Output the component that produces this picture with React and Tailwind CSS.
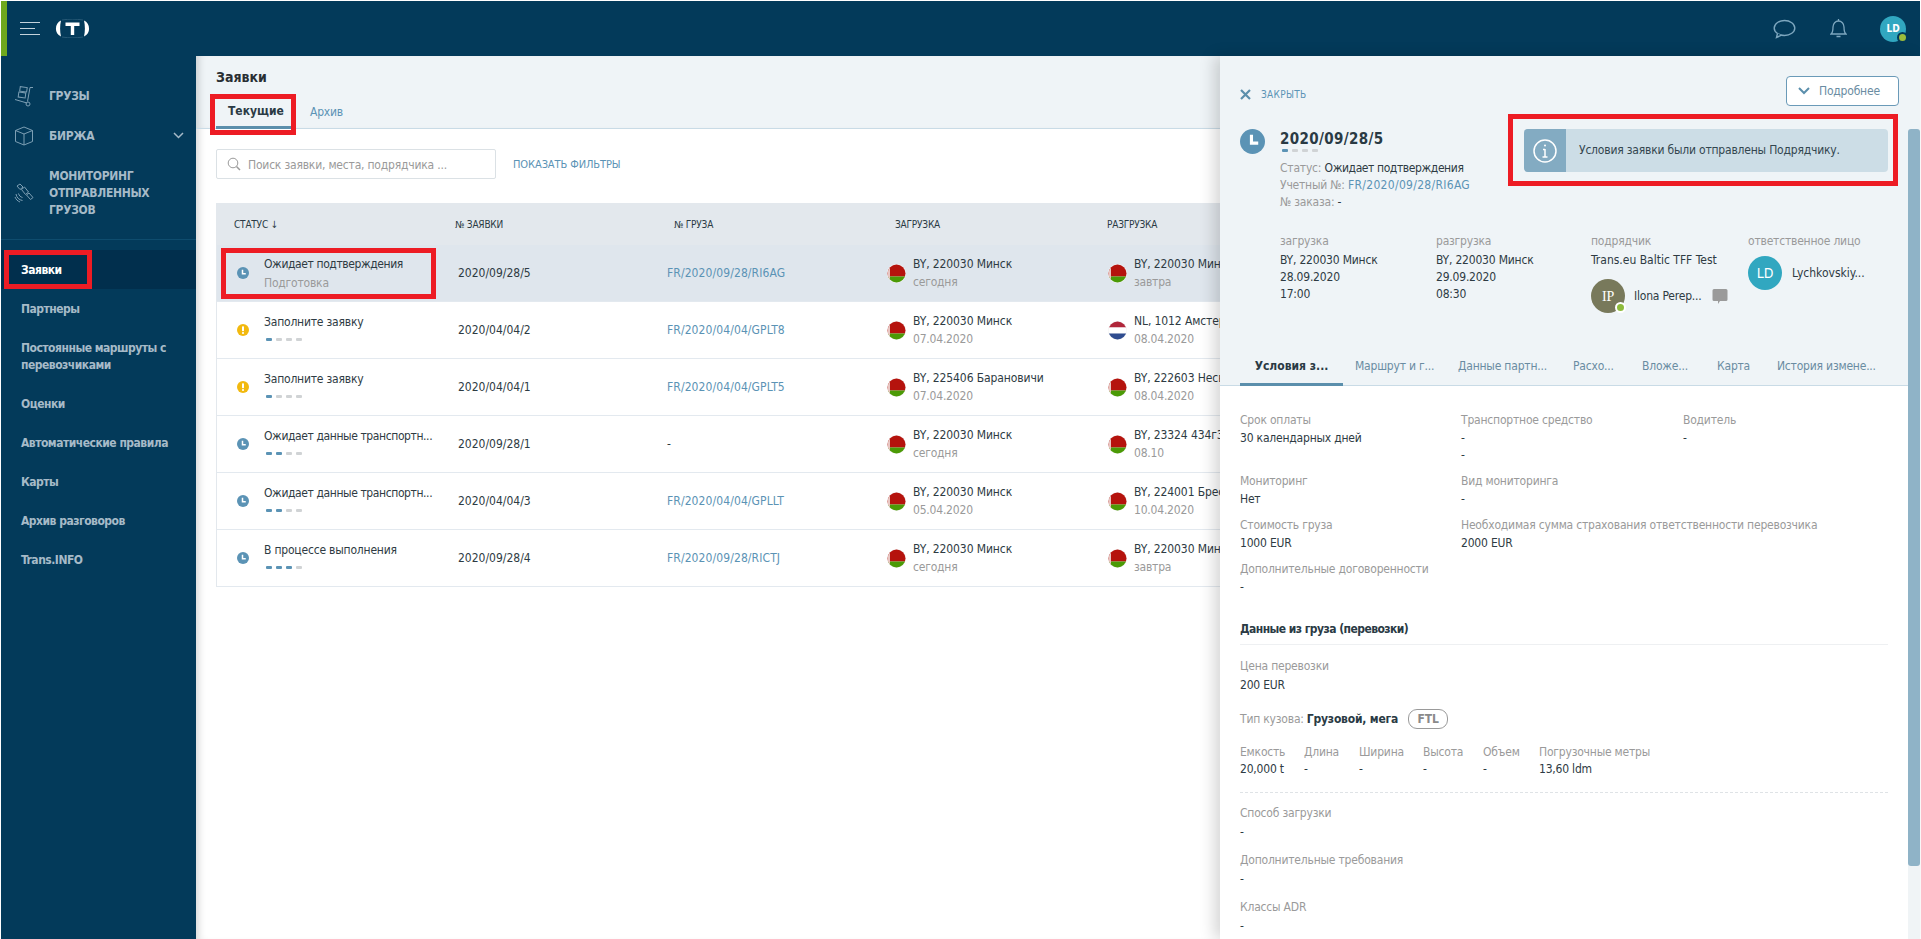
import React from "react";

const F = { fontFamily: '"DejaVu Sans Condensed", "DejaVu Sans", "Noto Sans", sans-serif', fontStretch: "condensed" };
const LABEL = "text-[#9a9a9a]";
const RED = "absolute border-[5px] border-[#ed1c24] pointer-events-none";

function Clock({ size = 12 }) {
  return (
    <svg width={size} height={size} viewBox="0 0 24 24" className="shrink-0">
      <circle cx="12" cy="12" r="12" fill="#5b93b5" />
      <path d="M11 5.500v8h6.500" fill="none" stroke="#fff" strokeWidth="3" />
    </svg>
  );
}
function Warn() {
  return (
    <svg width="12" height="12" viewBox="0 0 24 24" className="shrink-0">
      <circle cx="12" cy="12" r="12" fill="#f2b90f" />
      <rect x="10" y="4.500" width="4" height="10" rx="1.500" fill="#fff" />
      <circle cx="12" cy="18" r="2.200" fill="#fff" />
    </svg>
  );
}
function Dots({ n }) {
  return (
    <div className="flex gap-[4px] ml-[2px]">
      {[0, 1, 2, 3].map((i) => (
        <span key={i} className={i < n ? "w-[6px] h-[3px] rounded-[1px] bg-[#5b93b5]" : "w-[6px] h-[3px] rounded-[1px] bg-[#d0d3d5]"} />
      ))}
    </div>
  );
}
function Flag({ nl, id }) {
  return (
    <svg width="19" height="19" viewBox="0 0 19 19" className="shrink-0">
      <defs>
        <clipPath id={id}><circle cx="9.500" cy="9.500" r="9" /></clipPath>
      </defs>
      <circle cx="9.500" cy="9.500" r="9.500" fill="#f2f2f2" />
      <g clipPath={`url(#${id})`}>
        {nl ? (
          <>
            <rect width="19" height="6.500" fill="#b0263a" />
            <rect y="6.500" width="19" height="6" fill="#fff" />
            <rect y="12.500" width="19" height="6.500" fill="#2f4c8f" />
          </>
        ) : (
          <>
            <rect width="19" height="12.500" fill="#b5130d" />
            <rect y="12.500" width="19" height="6.500" fill="#4b9a06" />
            <rect width="3" height="19" fill="#e9c6c2" />
          </>
        )}
      </g>
    </svg>
  );
}

function Cargo() {
  return (
    <svg width="20" height="21" viewBox="0 0 20 21" fill="none" stroke="#7d9fb4" strokeWidth="1">
      <path d="M19 1.500h-3l-2.500 14" />
      <path d="M1 13.500l12 3.500" />
      <circle cx="14" cy="18" r="2" />
      <rect x="6" y="1" width="7" height="4.500" transform="rotate(8 9 3)" />
      <rect x="4.500" y="6.500" width="7" height="5" transform="rotate(8 8 9)" />
    </svg>
  );
}
function BoxI() {
  return (
    <svg width="20" height="20" viewBox="0 0 20 20" fill="none" stroke="#7d9fb4" strokeWidth="1">
      <path d="M10 1l8.500 3.500v11L10 19l-8.500-3.500v-11z" />
      <path d="M1.500 4.500L10 8l8.500-3.500M10 8v11" />
    </svg>
  );
}
function Sat() {
  return (
    <svg width="20" height="20" viewBox="0 0 20 20" fill="none" stroke="#7d9fb4" strokeWidth="1">
      <path d="M3 3l3-2 3 3-3 2.500z" />
      <path d="M7.500 6.500l3-2.500 4 5-3 2.500z" />
      <path d="M12.500 12l2.500-2 4 4.500-2.500 2z" />
      <path d="M2 11c.5 3.500 3 6 6.500 6.500M1 14c1 2.500 2.500 4 5 5M4.500 10.500c.5 2 2 3.500 4 4" />
    </svg>
  );
}

function TopBar() {
  return (
    <header className="h-[55px] shrink-0 bg-[#033a5a] flex items-center">
      <div className="w-[6px] h-full bg-[#6fa81e]" />
      <div className="ml-[13px] flex flex-col gap-[4.500px] w-[20px]">
        <span className="h-[1.500px] bg-[#c4d3dc]" />
        <span className="h-[1.500px] bg-[#c4d3dc] w-[15px]" />
        <span className="h-[1.500px] bg-[#c4d3dc]" />
      </div>
      <svg width="37" height="19" viewBox="0 0 37 19" className="ml-[14px]">
        <path d="M8 1C16 -.2 21 -.2 29 1M8 18c8 1.200 13 1.200 21 0" fill="none" stroke="#3f6d88" strokeWidth=".6" />
        <path d="M7 1.500C1 4 -.5 14 7 17.500c-1.200-5-1.200-11 0-16z" fill="#fff" />
        <path d="M30 1.500C36 4 37.500 14 30 17.500c1.200-5 1.200-11 0-16z" fill="#fff" />
        <path d="M11.500 3.500h14v3.400h-5.300v9.100h-3.400V6.900h-5.300z" fill="#fff" />
      </svg>
      <div className="ml-auto flex items-center">
        <svg width="23" height="20" viewBox="0 0 23 20" fill="none" stroke="#7ea7bf" strokeWidth="1.400">
          <ellipse cx="11.500" cy="9" rx="10.300" ry="7.500" />
          <path d="M4.500 14.500L3.500 18.500l5-2.300" fill="#033a5a" />
        </svg>
        <svg width="17" height="21" viewBox="0 0 17 21" fill="none" stroke="#7ea7bf" strokeWidth="1.300" className="ml-[34px]">
          <path d="M1 16c2-1.500 2-3 2-7 0-3.500 2.500-6 5.500-6s5.500 2.500 5.500 6c0 4 0 5.500 2 7z" />
          <path d="M8.500 1v2M6.500 18.500h4" />
        </svg>
        <div className="relative ml-[33px] mr-[14px] w-[26px] h-[26px] rounded-full bg-[#31a7c0] flex items-center justify-center text-white text-[10px] font-bold">
          LD
          <span className="absolute right-[-2px] bottom-[-1px] w-[11px] h-[11px] rounded-full bg-[#9cbc3b] border-[2px] border-[#033a5a]" />
        </div>
      </div>
    </header>
  );
}

function Sidebar() {
  const top = [
    { t: ["ГРУЗЫ"], i: <Cargo />, h: 40 },
    { t: ["БИРЖА"], i: <BoxI />, h: 40, ch: true },
    { t: ["МОНИТОРИНГ", "ОТПРАВЛЕННЫХ", "ГРУЗОВ"], i: <Sat />, h: 74 },
  ];
  const sub = [["Партнеры"], ["Постоянные маршруты с", "перевозчиками"], ["Оценки"], ["Автоматические правила"], ["Карты"], ["Архив разговоров"], ["Trans.INFO"]];
  return (
    <aside className="w-[195px] shrink-0 bg-[#033a5a] flex flex-col pt-[20px] text-[12px] font-bold text-[#a6bac8] z-10">
      {top.map((x) => (
        <div key={x.t[0]} className="flex items-center relative pl-[13px] text-[12px] leading-[17px] tracking-[-0.3px]" style={{ height: x.h }}>
          <span className="w-[20px] flex justify-center">{x.i}</span>
          <div className="ml-[15px]">{x.t.map((l) => <div key={l}>{l}</div>)}</div>
          {x.ch && (
            <svg width="11" height="7" viewBox="0 0 11 7" fill="none" stroke="#a6bac8" strokeWidth="1.500" className="absolute left-[172px] top-[16px]">
              <path d="M1 1l4.500 4.500L10 1" />
            </svg>
          )}
        </div>
      ))}
      <div className="mt-[9px] h-[1px] bg-[#0e4c6e]" />
      <div className="mt-[10px] relative h-[39px] bg-[#012f4d] flex items-center pl-[20px] text-white tracking-[-0.5px]">
        Заявки
        <div className={`${RED} left-[3px] top-0 w-[88px] h-[39px]`} />
      </div>
      <div className="mt-[12px] pl-[20px] flex flex-col gap-[22px] leading-[17px] tracking-[-0.5px]">
        {sub.map((s) => (
          <div key={s[0]}>{s.map((l) => <div key={l}>{l}</div>)}</div>
        ))}
      </div>
    </aside>
  );
}

const ROWS = [
  { s: "Ожидает подтверждения", sub: "Подготовка", ic: "c", n: 1, no: "2020/09/28/5", fr: "FR/2020/09/28/RI6AG", a: "BY, 220030 Минск", ad: "сегодня", b: "BY, 220030 Минск", bd: "завтра", active: true, tight: true },
  { s: "Заполните заявку", ic: "w", n: 1, no: "2020/04/04/2", fr: "FR/2020/04/04/GPLT8", a: "BY, 220030 Минск", ad: "07.04.2020", b: "NL, 1012 Амстердам", bd: "08.04.2020", nl: true },
  { s: "Заполните заявку", ic: "w", n: 1, no: "2020/04/04/1", fr: "FR/2020/04/04/GPLT5", a: "BY, 225406 Барановичи", ad: "07.04.2020", b: "BY, 222603 Несвиж", bd: "08.04.2020" },
  { s: "Ожидает данные транспортн...", ic: "c", n: 2, no: "2020/09/28/1", fr: "-", dark: true, a: "BY, 220030 Минск", ad: "сегодня", b: "BY, 23324 434г3", bd: "08.10", tight: true },
  { s: "Ожидает данные транспортн...", ic: "c", n: 2, no: "2020/04/04/3", fr: "FR/2020/04/04/GPLLT", a: "BY, 220030 Минск", ad: "05.04.2020", b: "BY, 224001 Брест", bd: "10.04.2020", tight: true },
  { s: "В процессе выполнения", ic: "c", n: 3, no: "2020/09/28/4", fr: "FR/2020/09/28/RICTJ", a: "BY, 220030 Минск", ad: "сегодня", b: "BY, 220030 Минск", bd: "завтра" },
];
const GRID = "grid grid-cols-[235px_213px_221px_221px_1fr]";

function Place({ top, bottom, id, nl }) {
  return (
    <div className="pl-[1px] flex items-center">
      <Flag id={id} nl={nl} />
      <div className="ml-[7px] whitespace-nowrap">
        <div className="relative top-[1px] tracking-[-0.1px]">{top}</div>
        <div className={`mt-[2px] ${LABEL}`}>{bottom}</div>
      </div>
    </div>
  );
}

function Main() {
  return (
    <main className="flex-1 min-w-0 bg-white relative shadow-[inset_8px_0_8px_-6px_rgba(0,0,0,0.18)]">
      <div className="h-[73px] bg-[#eff4f7] border-b border-[#c9dbe6] pl-[20px] relative shadow-[inset_8px_0_8px_-6px_rgba(0,0,0,0.18)]">
        <div className="pt-[12px] text-[14px] font-bold leading-[18px] text-[#2a2f33] tracking-[0px]">Заявки</div>
        <div className="flex mt-[9px] text-[12px] leading-[17px]">
          <div className="relative w-[75px] h-[34px] pl-[12px] pt-[8px] font-bold text-[#2a3a44] border-b-[3px] border-[#5b8fac] tracking-[0px]">
            Текущие
            <div className={`${RED} left-[-6px] top-[-1px] w-[86px] h-[41px]`} />
          </div>
          <div className="ml-[19px] pt-[9px] text-[#5b93b5]">Архив</div>
        </div>
      </div>
      <div className="pl-[20px] pt-[20px] flex items-center">
        <div className="w-[280px] h-[30px] border border-[#dbe1e5] rounded-[2px] flex items-center pl-[10px] text-[12px] text-[#9a9a9a]">
          <svg width="14" height="14" viewBox="0 0 14 14" fill="none" stroke="#9a9a9a" strokeWidth="1" className="mr-[7px]">
            <circle cx="6" cy="6" r="4.800" />
            <path d="M9.500 9.500l3.500 3.500" strokeWidth="1.500" />
          </svg>
          <span className="pt-[2px]">Поиск заявки, места, подрядчика ...</span>
        </div>
        <div className="ml-[17px] pt-[2px] text-[11px] text-[#5b93b5] tracking-[-0.1px]">ПОКАЗАТЬ ФИЛЬТРЫ</div>
      </div>
      <div className="ml-[20px] mt-[24px] w-[1690px] border-l border-[#e3e8ed]">
        <div className={`${GRID} h-[42px] items-center bg-[#e3e8ed] text-[10px] text-[#2a3a44]`}>
          <div className="pl-[17px]">СТАТУС ↓</div>
          <div className="pl-[3px]">№ ЗАЯВКИ</div>
          <div className="pl-[9px]">№ ГРУЗА</div>
          <div className="pl-[9px]">ЗАГРУЗКА</div>
          <div>РАЗГРУЗКА</div>
        </div>
        {ROWS.map((r, i) => (
          <div key={i} className={`${GRID} h-[57px] items-center border-b border-[#e3e9ef] text-[12px] leading-[17px] text-[#2e3b43] ${r.active ? "bg-[#dfe6ed]" : "bg-white"}`}>
            <div className="relative h-full flex items-center pl-[20px]">
              {r.ic === "c" ? <Clock /> : <Warn />}
              <div className="ml-[15px] whitespace-nowrap">
                <div className={r.tight ? "relative top-[1px] tracking-[-0.4px]" : "relative top-[1px]"}>{r.s}</div>
                <div className={`mt-[3px] ${r.sub ? "" : "h-[14px] flex items-center relative top-[-1px]"} ${LABEL}`}>{r.sub ? r.sub : <Dots n={r.n} />}</div>
              </div>
              {r.active && <div className={`${RED} left-[4px] top-[3px] w-[215px] h-[51px]`} />}
            </div>
            <div className="pl-[6px] tracking-[0px]">{r.no}</div>
            <div className={`pl-[2px] tracking-[0.1px] ${r.dark ? "" : "text-[#5b93b5]"}`}>{r.fr}</div>
            <Place top={r.a} bottom={r.ad} id={`fa${i}`} />
            <Place top={r.b} bottom={r.bd} id={`fb${i}`} nl={r.nl} />
          </div>
        ))}
      </div>
    </main>
  );
}

function Field({ label, value, className = "", gap = "mt-[1px]" }) {
  return (
    <div className={className}>
      <div className={LABEL}>{label}</div>
      <div className={`${gap} text-[#2e3b43]`}>{value}</div>
    </div>
  );
}

function Panel() {
  const tabs = [
    ["Маршрут и г...", 103], ["Данные партн...", 115], ["Расхо...", 69], ["Вложе...", 75], ["Карта", 60], ["История измене...", 110],
  ];
  return (
    <section className="absolute top-0 right-0 bottom-0 w-[700px] bg-white shadow-[-6px_0_14px_rgba(0,0,0,0.16)] text-[12px] leading-[17px] z-20 overflow-hidden">
      <div className="h-[330px] bg-[#eff4f7] border-b border-[#c9dbe6] relative flex flex-col">
        <div className="pl-[20px] pr-[21px] pt-[20px] flex items-start justify-between">
          <div className="flex items-center mt-[10px] text-[10px] text-[#5b93b5] leading-[17px] tracking-[0.3px]">
            <svg width="11" height="11" viewBox="0 0 11 11" stroke="#5b8fac" strokeWidth="2.200" fill="none"><path d="M1 1l9 9M10 1l-9 9" /></svg>
            <span className="ml-[10px]">ЗАКРЫТЬ</span>
          </div>
          <div className="w-[113px] h-[30px] rounded-[4px] border border-[#6a9ab8] bg-white flex items-center pl-[11px] text-[#6a8ca2]">
            <svg width="12" height="8" viewBox="0 0 12 8" fill="none" stroke="#5b8fac" strokeWidth="2"><path d="M1 1l5 5 5-5" /></svg>
            <span className="ml-[9px]">Подробнее</span>
          </div>
        </div>
        <div className="pl-[20px] mt-[23px] flex items-start">
          <div className="w-[284px] flex items-start">
            <Clock size={25} />
            <div className="ml-[15px]">
              <div className="text-[15px] leading-[20px] font-bold text-[#2a3a44] tracking-[0.35px]">2020/09/28/5</div>
              <Dots n={1} />
              <div className="mt-[8px] text-[#2e3b43]"><span className={LABEL}>Статус:</span> <span className="tracking-[-0.4px]">Ожидает подтверждения</span></div>
              <div><span className={LABEL}>Учетный №:</span> <span className="text-[#5b93b5] tracking-[0.3px]">FR/2020/09/28/RI6AG</span></div>
              <div><span className={LABEL}>№ заказа:</span> <span className="text-[#2e3b43]">-</span></div>
            </div>
          </div>
          <div className="relative w-[364px] h-[43px] rounded-[4px] bg-[#ccdde6] flex items-center overflow-visible">
            <div className="w-[42px] h-full bg-[#83abc2] rounded-l-[4px] flex items-center justify-center">
              <svg width="24" height="24" viewBox="0 0 24 24" fill="none" stroke="#fff" strokeWidth="1.500">
                <circle cx="12" cy="12" r="11" />
                <path d="M12 10v8M9.500 18h5M10 10.500h2" />
                <circle cx="12" cy="6.500" r="1" fill="#fff" stroke="none" />
              </svg>
            </div>
            <span className="ml-[13px] text-[#33464f]">Условия заявки были отправлены Подрядчику.</span>
            <div className={`${RED} left-[-16px] top-[-15px] w-[390px] h-[72px]`} />
          </div>
        </div>
        <div className="absolute left-[60px] top-[177px] grid grid-cols-[156px_155px_157px_150px] text-[#2e3b43]">
          <div>
            <div className={LABEL}>загрузка</div>
            <div className="mt-[2px]">BY, 220030 Минск<br />28.09.2020<br />17:00</div>
          </div>
          <div>
            <div className={LABEL}>разгрузка</div>
            <div className="mt-[2px]">BY, 220030 Минск<br />29.09.2020<br />08:30</div>
          </div>
          <div>
            <div className={LABEL}>подрядчик</div>
            <div className="mt-[2px] whitespace-nowrap tracking-[0px]">Trans.eu Baltic TFF Test</div>
            <div className="mt-[10px] flex items-center">
              <div className="relative w-[34px] h-[34px] rounded-full bg-[#78795b] text-white text-[14px] flex items-center justify-center" style={{ fontFamily: '"Liberation Serif", serif' }}>
                IP
                <span className="absolute right-[-1px] bottom-[0px] w-[11px] h-[11px] rounded-full bg-[#8dbb3c] border-[2px] border-white" />
              </div>
              <span className="ml-[9px] whitespace-nowrap">Ilona Perep...</span>
              <svg width="16" height="17" viewBox="0 0 16 17" className="ml-[10px]"><path d="M2 1h12a1.500 1.500 0 0 1 1.500 1.500v9A1.500 1.500 0 0 1 14 13H8l-2 3v-3H2A1.500 1.500 0 0 1 .5 11.500v-9A1.500 1.500 0 0 1 2 1z" fill="#9a9a9a" /></svg>
            </div>
          </div>
          <div>
            <div className={LABEL}>ответственное лицо</div>
            <div className="mt-[6px] flex items-center">
              <div className="w-[34px] h-[34px] rounded-full bg-[#31a7c0] text-white text-[14px] flex items-center justify-center">LD</div>
              <span className="ml-[10px] whitespace-nowrap tracking-[0px]">Lychkovskiy...</span>
            </div>
          </div>
        </div>
        <div className="mt-auto ml-[20px] flex h-[27px] text-[#6a8ca2] whitespace-nowrap">
          <div className="w-[103px] -mb-[1px] text-center font-bold text-[#2a3a44] border-b-[3px] border-[#5b8fac] tracking-[0px]">Условия з...</div>
          <div className="flex pl-[12px]">
            {tabs.map(([t, w]) => <div key={t} style={{ width: w }}>{t}</div>)}
          </div>
        </div>
      </div>
      <div className="pl-[20px] pr-[32px] pt-[26px]">
        <div className="grid grid-cols-[221px_222px_1fr] h-[61px]">
          <Field label="Срок оплаты" value="30 календарных дней" />
          <Field label="Транспортное средство" value={<>-<br />-</>} />
          <Field label="Водитель" value="-" />
        </div>
        <div className="grid grid-cols-[221px_1fr] h-[44px]">
          <Field label="Мониторинг" value="Нет" />
          <Field label="Вид мониторинга" value="-" />
        </div>
        <div className="grid grid-cols-[221px_1fr] h-[44px]">
          <Field label="Стоимость груза" value="1000 EUR" />
          <Field label="Необходимая сумма страхования ответственности перевозчика" value="2000 EUR" />
        </div>
        <Field label="Дополнительные договоренности" value="-" />
        <div className="mt-[24px] pb-[6px] border-b border-[#eef0f2] font-bold text-[#2a3a44] leading-[18px] tracking-[-0.55px]">Данные из груза (перевозки)</div>
        <Field className="mt-[13px]" gap="mt-[2px]" label="Цена перевозки" value="200 EUR" />
        <div className="mt-[15px] flex items-center h-[20px]">
          <span className={LABEL}>Тип кузова:</span>
          <span className="ml-[3px] font-bold text-[#2a3a44] tracking-[-0.2px]">Грузовой, мега</span>
          <span className="ml-[10px] w-[40px] h-[20px] rounded-[9px] border border-[#9a9a9a] text-[#8a8a8a] font-bold flex items-center justify-center">FTL</span>
        </div>
        <div className="mt-[15px] flex h-[34px]">
          {[["Емкость", "20,000 t", 64], ["Длина", "-", 55], ["Ширина", "-", 64], ["Высота", "-", 60], ["Объем", "-", 56], ["Погрузочные метры", "13,60 ldm", 130]].map(([a, b, w]) => (
            <div key={a} style={{ width: w }}>
              <div className={LABEL}>{a}</div>
              <div className="text-[#2e3b43]">{b}</div>
            </div>
          ))}
        </div>
        <div className="mt-[14px] border-b border-dashed border-[#dfe3e6]" />
        <Field className="mt-[12px]" gap="mt-[2px]" label="Способ загрузки" value="-" />
        <Field className="mt-[11px]" gap="mt-[2px]" label="Дополнительные требования" value="-" />
        <Field className="mt-[11px]" gap="mt-[2px]" label="Классы ADR" value="-" />
      </div>
      <div className="absolute right-0 top-[73px] bottom-0 w-[12px] bg-[#f0f4f6]">
        <div className="h-[737px] rounded-[3px] bg-[#8fb3c7]" />
      </div>
    </section>
  );
}

export default function App() {
  return (
    <div className="h-[939px] w-full overflow-hidden bg-white pt-[1px] pl-[1px] pr-[1px] flex flex-col tracking-[-0.2px]" style={F}>
      <TopBar />
      <div className="flex-1 min-h-0 flex relative">
        <Sidebar />
        <Main />
        <Panel />
      </div>
    </div>
  );
}
